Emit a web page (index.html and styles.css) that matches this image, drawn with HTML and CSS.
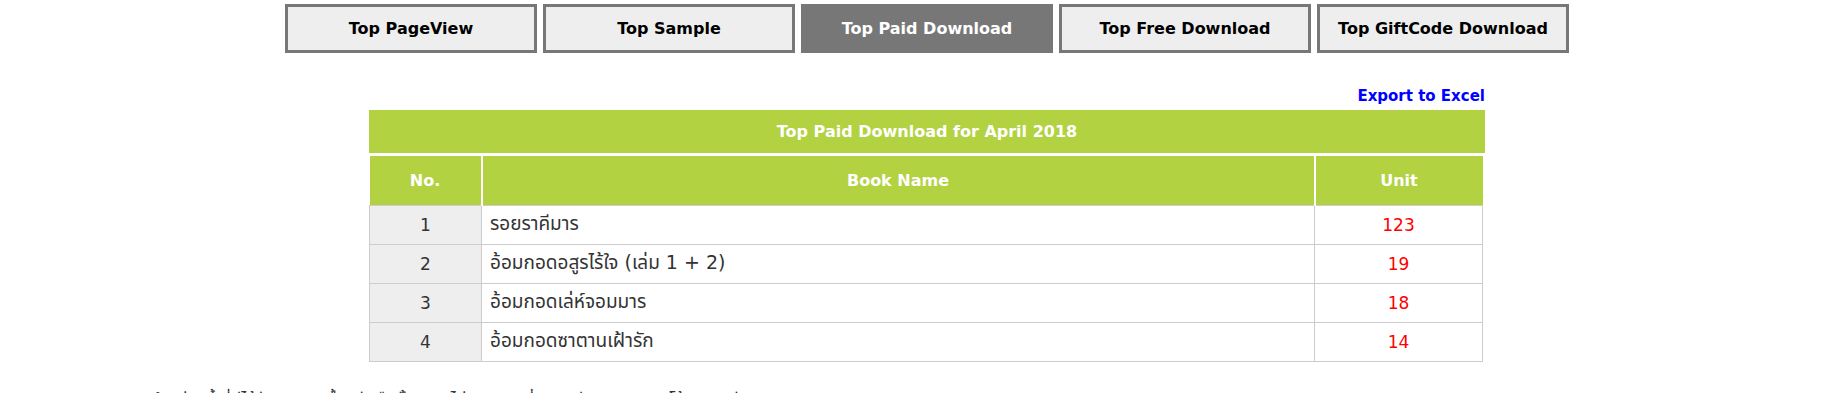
FILE: index.html
```html
<!DOCTYPE html>
<html lang="th">
<head>
    <meta charset="UTF-8">
    <title>Top Paid Download</title>
    <link rel="stylesheet" href="styles.css">
</head>
<body>
    <div class="page">
        <div class="tabs">
            <a class="tab" href="#">Top PageView</a>
            <a class="tab" href="#">Top Sample</a>
            <a class="tab active" href="#">Top Paid Download</a>
            <a class="tab" href="#">Top Free Download</a>
            <a class="tab" href="#">Top GiftCode Download</a>
        </div>

        <div class="report">
            <div class="export-row">
                <a class="export-link" href="#">Export to Excel</a>
            </div>
            <div class="report-title">Top Paid Download for April 2018</div>
            <table class="report-table">
                <thead>
                    <tr>
                        <th class="col-no">No.</th>
                        <th>Book Name</th>
                        <th class="col-unit">Unit</th>
                    </tr>
                </thead>
                <tbody>
                    <tr>
                        <td class="col-no">1</td>
                        <td class="book">รอยราคีมาร</td>
                        <td class="col-unit">123</td>
                    </tr>
                    <tr>
                        <td class="col-no">2</td>
                        <td class="book">อ้อมกอดอสูรไร้ใจ (เล่ม 1 + 2)</td>
                        <td class="col-unit">19</td>
                    </tr>
                    <tr>
                        <td class="col-no">3</td>
                        <td class="book">อ้อมกอดเล่ห์จอมมาร</td>
                        <td class="col-unit">18</td>
                    </tr>
                    <tr>
                        <td class="col-no">4</td>
                        <td class="book">อ้อมกอดซาตานเฝ้ารัก</td>
                        <td class="col-unit">14</td>
                    </tr>
                </tbody>
            </table>
        </div>

        <p class="note"><span class="star">*</span> ยอดจำหน่ายนี้ ที่มีได้รับจากการซื้อหนังสือทั้งหมด ไม่รวมยอดที่แจกฟรี และยอดจากโค้ดของขวัญ</p>
    </div>
</body>
</html>
```

FILE: styles.css
```css
:root {
    --green: #b2d242;
    --tab-bg: #eeeeee;
    --tab-border: #777777;
    --cell-border: #cccccc;
    --text: #333333;
    --font-main: Tahoma, "DejaVu Sans", "Noto Sans", "Noto Sans Thai", sans-serif;
}
* { box-sizing: border-box; }
body {
    margin: 0;
    font-family: var(--font-main);
    color: var(--text);
    background: #fff;
}
.page {
    width: 1654px;
    margin-left: 100px;
    padding-top: 4px;
}

/* Tabs */
.tabs {
    display: flex;
    justify-content: center;
    gap: 6px;
}
.tab {
    width: 252px;
    height: 49px;
    display: flex;
    align-items: center;
    justify-content: center;
    background: var(--tab-bg);
    border: 3px solid var(--tab-border);
    color: #000;
    font-size: 16px;
    font-weight: bold;
    text-decoration: none;
}
.tab.active {
    background: var(--tab-border);
    color: #fff;
}

/* Report */
.report {
    width: 1116px;
    margin: 0 auto;
    padding-top: 34px;
}
.export-row {
    display: flex;
    justify-content: flex-end;
    height: 23px;
}
.export-link {
    color: #0000ff;
    font-size: 15px;
    font-weight: bold;
    text-decoration: none;
}
.report-title {
    background: var(--green);
    color: #fff;
    height: 43px;
    line-height: 43px;
    text-align: center;
    font-size: 16px;
    font-weight: bold;
}
.report-table {
    width: 1114px;
    border-collapse: collapse;
    margin-top: 3px;
    font-size: 16px;
}
.report-table th {
    background: var(--green);
    color: #fff;
    height: 49px;
    font-weight: bold;
    border-left: 2px solid #fff;
}
.report-table th:first-child { border-left: none; }
.report-table td {
    height: 39px;
    border: 1px solid var(--cell-border);
    padding: 0 8px;
    font-size: 17px;
}
.report-table td.book { font-size: 19px; }
.report-table .col-no {
    width: 112px;
    text-align: center;
}
.report-table td.col-no { background: var(--tab-bg); }
.report-table .col-unit {
    width: 168px;
    text-align: center;
}
.report-table td.col-unit { color: #ff0000; }

/* Note */
.note {
    margin: 26px 0 0 7px;
    font-size: 17px;
    white-space: nowrap;
}
.star { color: #ff0000; }
```
